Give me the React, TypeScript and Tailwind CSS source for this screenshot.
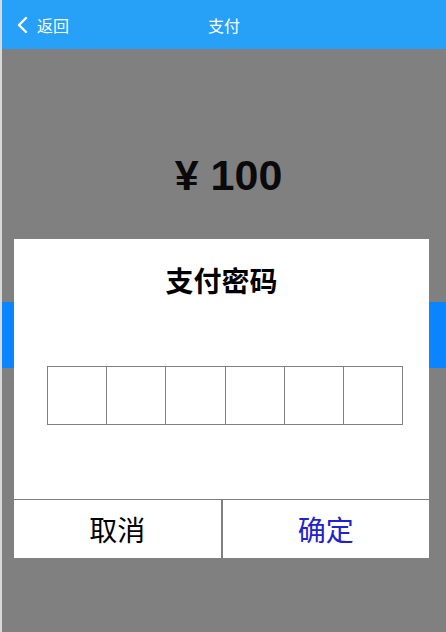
import React, {useState} from 'react';

const cjk = {fontFamily: '"Noto Sans CJK SC", "Liberation Sans", sans-serif'};

const PasswordBoxes = ({value}: {value: string}) => {
    const cells = [0, 1, 2, 3, 4, 5];
    return (
        <div className="flex ml-[33px] w-[356px] h-[59px] border border-[#808080]">
            {cells.map((i) => (
                <div
                    key={i}
                    className={`flex-1 flex items-center justify-center text-2xl ${i > 0 ? 'border-l border-[#808080]' : ''}`}
                >
                    {value[i] ? '•' : ''}
                </div>
            ))}
        </div>
    );
};

const App = () => {
    const [password] = useState<string>('');

    return (
        <div className="relative w-[446px] h-[632px] overflow-hidden bg-[#808080] border-l-2 border-[#d9d9d9]" style={cjk}>
            <div className="relative flex items-center h-[49px] bg-[#27a1f7] text-white text-base">
                <div className="flex items-center pl-[14px]">
                    <svg width="14" height="18" viewBox="0 0 14 18" fill="none">
                        <path d="M10 2 L3 9 L10 16" stroke="white" strokeWidth="2.4" strokeLinecap="round" strokeLinejoin="round" />
                    </svg>
                    <span className="ml-[7px]">返回</span>
                </div>
                <div className="absolute inset-x-0 text-center pointer-events-none">支付</div>
            </div>

            <div className="pt-[105px] pl-[9px] text-center text-[43px] leading-none font-bold text-[#0a0a0a] font-['Liberation_Sans',sans-serif]">
                ¥ 100
            </div>

            <div className="mt-[105px] h-[66px] bg-[#0a84ff]"></div>

            <div className="absolute left-[12px] top-[239px] w-[415px] h-[319px] bg-white flex flex-col">
                <div className="pt-[27px] text-center text-[28px] leading-none font-bold text-black">
                    支付密码
                </div>
                <div className="mt-[72px]">
                    <PasswordBoxes value={password} />
                </div>
                <div className="flex-1"></div>
                <div className="flex h-[59px] border-t border-[#808080]">
                    <button className="flex-1 flex items-center justify-center text-[28px] text-black border-r-2 border-[#808080]">
                        取消
                    </button>
                    <button className="flex-1 flex items-center justify-center text-[28px] text-[#2222cc]">
                        确定
                    </button>
                </div>
            </div>
        </div>
    );
};

export default App;
